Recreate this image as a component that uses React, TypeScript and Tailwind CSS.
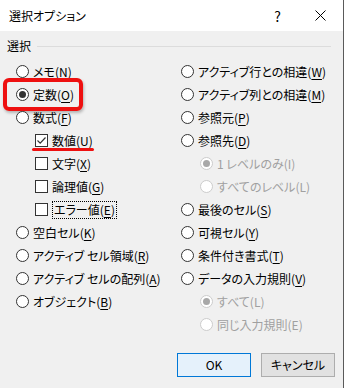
import React from "react";

type Opt = {
  text: string;
  key: string;
  checked?: boolean;
  disabled?: boolean;
  indent?: boolean;
};

const LEFT: (Opt & { kind: "radio" | "check"; focus?: boolean; mark?: "box" | "line" })[] = [
  { kind: "radio", text: "メモ", key: "N" },
  { kind: "radio", text: "定数", key: "O", checked: true, mark: "box" },
  { kind: "radio", text: "数式", key: "F" },
  { kind: "check", text: "数値", key: "U", checked: true, mark: "line" },
  { kind: "check", text: "文字", key: "X" },
  { kind: "check", text: "論理値", key: "G" },
  { kind: "check", text: "エラー値", key: "E", focus: true },
  { kind: "radio", text: "空白セル", key: "K" },
  { kind: "radio", text: "アクティブ セル領域", key: "R" },
  { kind: "radio", text: "アクティブ セルの配列", key: "A" },
  { kind: "radio", text: "オブジェクト", key: "B" },
];

const RIGHT: Opt[] = [
  { text: "アクティブ行との相違", key: "W" },
  { text: "アクティブ列との相違", key: "M" },
  { text: "参照元", key: "P" },
  { text: "参照先", key: "D" },
  { text: "1 レベルのみ", key: "I", checked: true, disabled: true, indent: true },
  { text: "すべてのレベル", key: "L", disabled: true, indent: true },
  { text: "最後のセル", key: "S" },
  { text: "可視セル", key: "Y" },
  { text: "条件付き書式", key: "T" },
  { text: "データの入力規則", key: "V" },
  { text: "すべて", key: "L", checked: true, disabled: true, indent: true },
  { text: "同じ入力規則", key: "E", disabled: true, indent: true },
];

function Label({ text, k, disabled }: { text: string; k: string; disabled?: boolean }) {
  return (
    <span className={disabled ? "text-[#a0a0a0]" : "text-black"}>
      {text}(
      {disabled ? k : <span className="underline underline-offset-2">{k}</span>})
    </span>
  );
}

function RadioDot({ checked, disabled }: { checked?: boolean; disabled?: boolean }) {
  return (
    <span
      className={
        "flex h-[13px] w-[13px] shrink-0 items-center justify-center rounded-full border bg-white " +
        (disabled ? "border-[#cccccc]" : "border-[#333333]")
      }
    >
      {checked && (
        <span
          className={
            "h-[7px] w-[7px] rounded-full " + (disabled ? "bg-[#a8a8a8]" : "bg-[#333333]")
          }
        />
      )}
    </span>
  );
}

function CheckBox({ checked }: { checked?: boolean }) {
  return (
    <span className="flex h-[13px] w-[13px] shrink-0 items-center justify-center border border-[#333333] bg-white">
      {checked && (
        <svg width="11" height="11" viewBox="0 0 11 11">
          <path d="M1.5 5.5 L4.2 8.2 L9.5 2.5" fill="none" stroke="#333333" strokeWidth="1.2" />
        </svg>
      )}
    </span>
  );
}

export default function App() {
  return (
    <div className="flex h-[388px] w-[344px] flex-col overflow-hidden border-r border-[#5a5a5a] bg-[#f0f0f0] text-[12px] leading-[16px] font-['Noto_Sans_CJK_JP','Noto_Sans',sans-serif] [font-feature-settings:'palt']">
      {/* title bar */}
      <div className="flex h-[31px] shrink-0 items-center bg-white pl-[9px]">
        <span className="flex-1 text-[12px] text-black">選択オプション</span>
        <span className="mr-[34px] text-[14px] text-black">?</span>
        <svg width="11" height="11" viewBox="0 0 11 11" className="mr-[17px]">
          <path d="M0.5 0.5 L10.5 10.5 M10.5 0.5 L0.5 10.5" stroke="#000" strokeWidth="1" />
        </svg>
      </div>

      {/* body */}
      <div className="flex flex-1 flex-col px-[7px] pt-[7px]">
        <div className="flex items-center gap-[6px]">
          <span className="text-black">選択</span>
          <span className="mr-[5px] h-px flex-1 bg-[#dcdcdc]" />
        </div>

        <div className="mt-[6px] grid grid-cols-[165px_1fr] pl-[9px]">
          <div className="flex flex-col">
            {LEFT.map((o) => (
              <div
                key={o.text}
                className={"relative flex h-[23px] items-center gap-[4px] " + (o.kind === "check" ? "pl-[19px]" : "")}
              >
                {o.kind === "radio" ? <RadioDot checked={o.checked} /> : <CheckBox checked={o.checked} />}
                <span className={o.focus ? "border border-dotted border-black px-px" : ""}>
                  <Label text={o.text} k={o.key} />
                </span>
                {o.mark === "box" && (
                  <span className="absolute left-[-13px] top-[-5px] h-[33px] w-[80px] rounded-[6px] border-[4px] border-[#ee1010] shadow-[1px_2px_3px_rgba(0,0,0,0.25)]" />
                )}
                {o.mark === "line" && (
                  <span className="absolute left-[16px] top-[19px] h-[3px] w-[62px] rounded-full bg-[#ee1010]" />
                )}
              </div>
            ))}
          </div>

          <div className="flex flex-col">
            {RIGHT.map((o, i) => (
              <div
                key={i}
                className={"flex h-[23px] items-center gap-[4px] " + (o.indent ? "pl-[19px]" : "")}
              >
                <RadioDot checked={o.checked} disabled={o.disabled} />
                <Label text={o.text} k={o.key} disabled={o.disabled} />
              </div>
            ))}
          </div>
        </div>

        <div className="mt-[17px] flex justify-end gap-[10px] pr-[1px]">
          <button className="h-[24px] w-[74px] border border-[#0078d7] bg-[#e5f1fb] text-black">
            OK
          </button>
          <button className="h-[24px] w-[74px] border border-[#adadad] bg-[#e1e1e1] text-black">
            キャンセル
          </button>
        </div>
      </div>
    </div>
  );
}
